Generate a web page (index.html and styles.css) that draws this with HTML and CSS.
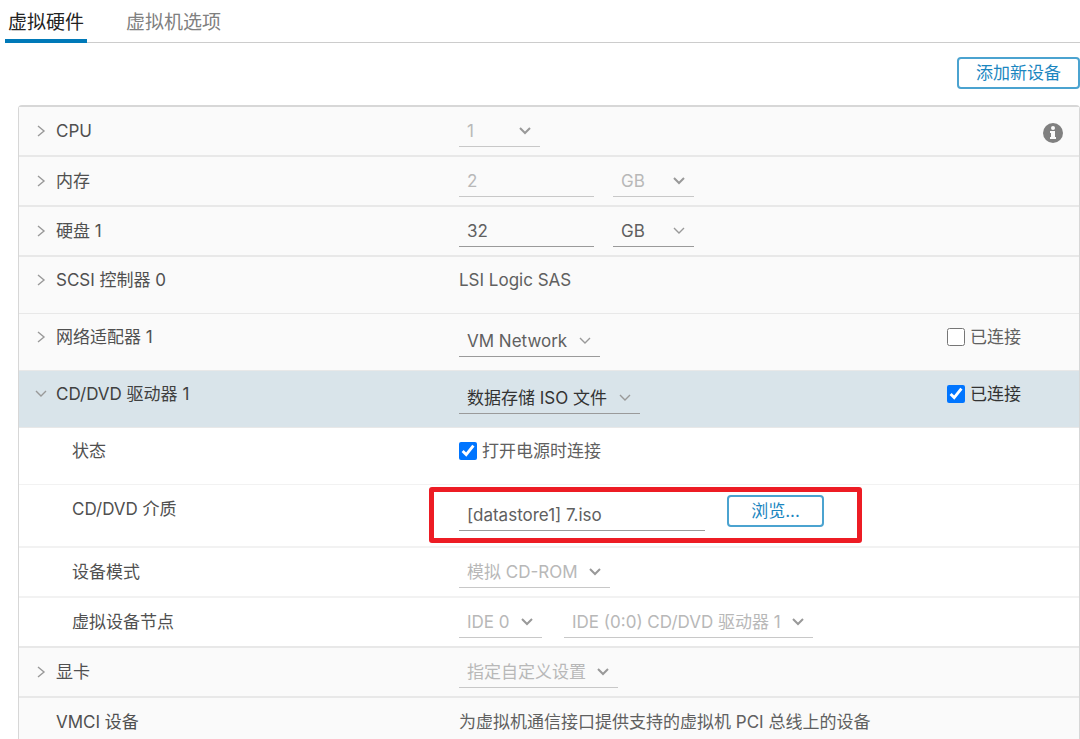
FILE: index.html
```html
<!DOCTYPE html>
<html lang="zh-CN">
<head>
    <meta charset="UTF-8">
    <meta name="viewport" content="width=device-width, initial-scale=1.0">
    <title>编辑设置</title>
    <link rel="stylesheet" href="styles.css">
</head>
<body>
    <svg class="sprite" aria-hidden="true">
        <symbol id="right" viewBox="0 0 12 12"><path d="M3 1l6 5-6 5" fill="none" stroke="currentColor" stroke-width="1.4"/></symbol>
        <symbol id="down" viewBox="0 0 12 12"><path d="M1 3l5 5 5-5" fill="none" stroke="currentColor" stroke-width="1.4"/></symbol>
        <symbol id="caret" viewBox="0 0 12 12"><path d="M1 3l5 5 5-5" fill="none" stroke="currentColor" stroke-width="2"/></symbol>
    </svg>

    <nav class="tabs" role="tablist">
        <button class="tab active" role="tab" aria-selected="true">虚拟硬件</button>
        <button class="tab" role="tab" aria-selected="false">虚拟机选项</button>
    </nav>

    <div class="toolbar">
        <button class="btn">添加新设备</button>
    </div>

    <main class="hardware">
        <div class="row">
            <button class="name" aria-expanded="false"><svg class="icon"><use href="#right"/></svg>CPU</button>
            <div class="value">
                <span class="select"><select class="field short" aria-label="CPU" disabled><option>1</option></select><svg class="icon"><use href="#caret"/></svg></span>
            </div>
            <div class="extra end">
                <svg class="info" viewBox="0 0 20 20" role="img" aria-label="信息">
                    <circle cx="10" cy="10" r="10" fill="#808080"/>
                    <circle cx="10" cy="5" r="2" fill="#fafafa"/>
                    <path d="M7 8h5v6h1v2H7v-2h1v-4H7z" fill="#fafafa"/>
                </svg>
            </div>
        </div>
        <div class="row">
            <button class="name" aria-expanded="false"><svg class="icon"><use href="#right"/></svg>内存</button>
            <div class="value">
                <input class="field size" type="text" value="2" aria-label="内存" disabled>
                <span class="select"><select class="field short" aria-label="内存单位" disabled><option>GB</option></select><svg class="icon"><use href="#caret"/></svg></span>
            </div>
        </div>
        <div class="row">
            <button class="name" aria-expanded="false"><svg class="icon"><use href="#right"/></svg>硬盘 1</button>
            <div class="value">
                <input class="field size" type="text" value="32" aria-label="硬盘 1">
                <span class="select"><select class="field short" aria-label="硬盘单位"><option>GB</option></select><svg class="icon"><use href="#down"/></svg></span>
            </div>
        </div>
        <div class="row tall">
            <button class="name" aria-expanded="false"><svg class="icon"><use href="#right"/></svg>SCSI 控制器 0</button>
            <div class="value text">LSI Logic SAS</div>
        </div>
        <div class="row tall">
            <button class="name" aria-expanded="false"><svg class="icon"><use href="#right"/></svg>网络适配器 1</button>
            <div class="value">
                <span class="select"><select class="field" aria-label="网络适配器 1"><option>VM Network</option></select><svg class="icon"><use href="#down"/></svg></span>
            </div>
            <div class="extra">
                <label class="check"><input type="checkbox">已连接</label>
            </div>
        </div>
        <div class="row tall open">
            <button class="name" aria-expanded="true"><svg class="icon"><use href="#down"/></svg>CD/DVD 驱动器 1</button>
            <div class="value">
                <span class="select"><select class="field" aria-label="CD/DVD 驱动器 1"><option>数据存储 ISO 文件</option></select><svg class="icon"><use href="#down"/></svg></span>
            </div>
            <div class="extra">
                <label class="check"><input type="checkbox" checked>已连接</label>
            </div>
        </div>
        <div class="row tall sub">
            <div class="name">状态</div>
            <div class="value text">
                <label class="check"><input type="checkbox" checked>打开电源时连接</label>
            </div>
        </div>
        <div class="row media sub">
            <label class="name" for="iso">CD/DVD 介质</label>
            <div class="value">
                <div class="picker">
                    <input class="field path" id="iso" type="text" value="[datastore1] 7.iso">
                    <button class="btn browse">浏览...</button>
                </div>
            </div>
        </div>
        <div class="row sub">
            <label class="name" for="mode">设备模式</label>
            <div class="value">
                <span class="select"><select class="field" id="mode" disabled><option>模拟 CD-ROM</option></select><svg class="icon"><use href="#caret"/></svg></span>
            </div>
        </div>
        <div class="row sub last-sub">
            <label class="name" for="node">虚拟设备节点</label>
            <div class="value wide">
                <span class="select"><select class="field" id="node" disabled><option>IDE 0</option></select><svg class="icon"><use href="#caret"/></svg></span>
                <span class="select"><select class="field" aria-label="节点位置" disabled><option>IDE (0:0) CD/DVD 驱动器 1</option></select><svg class="icon"><use href="#caret"/></svg></span>
            </div>
        </div>
        <div class="row">
            <button class="name" aria-expanded="false"><svg class="icon"><use href="#right"/></svg>显卡</button>
            <div class="value">
                <span class="select"><select class="field" aria-label="显卡" disabled><option>指定自定义设置</option></select><svg class="icon"><use href="#caret"/></svg></span>
            </div>
        </div>
        <div class="row">
            <div class="name plain">VMCI 设备</div>
            <div class="value text">为虚拟机通信接口提供支持的虚拟机 PCI 总线上的设备</div>
        </div>
    </main>
</body>
</html>
```
FILE: styles.css
```css
* {
    box-sizing: border-box;
}

body {
    margin: 0;
    height: 100vh;
    overflow: hidden;
    background: #fff;
    color: #606060;
    font-family: Inter, "Noto Sans CJK SC", sans-serif;
    font-size: 17px;
    line-height: 24px;
}

button, input, select {
    font: inherit;
    color: inherit;
    margin: 0;
}

.sprite {
    position: absolute;
    width: 0;
    height: 0;
}

.icon {
    width: 12px;
    height: 12px;
    flex: none;
    color: #999;
}

/* Tabs */
.tabs {
    display: flex;
    gap: 36px;
    margin-left: 5px;
    height: 43px;
    box-shadow: inset 0 -1px #ccc;
}

.tab {
    padding: 6px 3px 0;
    border: 0;
    border-bottom: 4px solid transparent;
    background: none;
    color: #808080;
    font-size: 19px;
}

.tab.active {
    color: #222;
    border-bottom-color: #0079b8;
}

.toolbar {
    display: flex;
    justify-content: flex-end;
    padding: 14px 0 16px;
}

.btn {
    height: 32px;
    padding: 0 17px;
    border: 2px solid #4ba3d0;
    border-radius: 4px;
    background: #fff;
    color: #1b86bf;
    line-height: 26px;
}

/* Hardware list */
.hardware {
    margin-left: 18px;
    border: 1px solid #d7d7d7;
    border-top-width: 2px;
    border-radius: 4px 4px 0 0;
}

.row {
    display: grid;
    grid-template-columns: 440fr 488fr 132fr;
    align-items: start;
    height: 50px;
    padding-top: 12px;
    border-bottom: 2px solid #e8e8e8;
    background: #fafafa;
}

.row.tall {
    height: 57px;
    padding-top: 11px;
    border-bottom-width: 1px;
}

.row.media {
    height: 63px;
}

.row.open {
    background: #d9e4ea;
    color: #333;
}

.row.sub {
    background: #fff;
    border-bottom-color: #f2f2f2;
}

.row.last-sub {
    border-bottom-color: #e8e8e8;
}

.name {
    display: flex;
    align-items: center;
    gap: 9px;
    padding: 0 0 0 16px;
    border: 0;
    background: none;
    color: #505050;
    text-align: left;
}

.open .name {
    color: #404040;
}

.sub .name {
    padding-left: 53px;
}

.name.plain {
    padding-left: 37px;
}

.value {
    display: flex;
    gap: 19px;
}

.value.wide {
    gap: 22px;
}

.tall .value,
.media .value {
    padding-top: 4px;
}

.tall .value.text {
    padding-top: 0;
}

.field {
    height: 28px;
    padding: 0 8px 4px;
    border: 0;
    border-bottom: 1px solid #9a9a9a;
    border-radius: 0;
    background: none;
    appearance: none;
    outline: 0;
}

.field:disabled {
    border-bottom-color: #c8c8c8;
    color: #b8b8b8;
    opacity: 1;
}

.field.size {
    width: 135px;
}

.select {
    position: relative;
    display: inline-flex;
}

.select .field {
    padding-right: 32px;
}

.select .short {
    width: 81px;
}

.select .icon {
    position: absolute;
    right: 9px;
    top: 6px;
    pointer-events: none;
}

.extra {
    display: flex;
}

.extra.end {
    justify-content: flex-end;
    padding: 4px 16px 0 0;
}

.info {
    width: 20px;
    height: 20px;
}

.check {
    display: flex;
    align-items: center;
    gap: 5px;
}

.check input {
    width: 18px;
    height: 18px;
}

/* Media picker, framed to stand out from the other settings */
.picker {
    position: relative;
    display: flex;
    align-items: flex-start;
    gap: 22px;
    margin-top: -6px;
}

.picker::after {
    content: "";
    position: absolute;
    inset: -8px -38px -12px -30px;
    border: 5px solid #ed1c24;
    border-radius: 3px;
    pointer-events: none;
}

.field.path {
    width: 246px;
    height: 36px;
    padding-top: 8px;
}

.btn.browse {
    width: 97px;
}
```
